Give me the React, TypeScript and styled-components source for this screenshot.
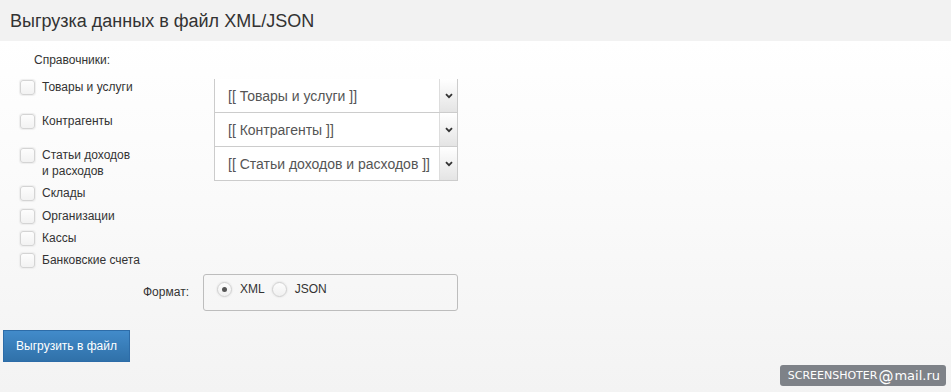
import React from 'react'
import styled, { createGlobalStyle } from 'styled-components'

const GlobalStyle = createGlobalStyle`
  html, body {
    margin: 0;
    padding: 0;
    height: 100%;
  }
  body {
    font-family: 'Liberation Sans', Arial, sans-serif;
    font-size: 12px;
    color: #333;
    background: #f4f4f4;
  }
  #root {
    height: 100%;
  }
`

const catalogs = [
  { id: 1, label: 'Товары и услуги', select: '[[ Товары и услуги ]]' },
  { id: 2, label: 'Контрагенты', select: '[[ Контрагенты ]]' },
  { id: 3, label: 'Статьи доходов\nи расходов', select: '[[ Статьи доходов и расходов ]]' },
  { id: 4, label: 'Склады' },
  { id: 5, label: 'Организации' },
  { id: 6, label: 'Кассы' },
  { id: 7, label: 'Банковские счета' },
]

const Page = styled.div`
  position: relative;
  height: 392px;
  background: linear-gradient(180deg, #ffffff 41px, #fafafa 200px, #f3f3f3 392px);
  overflow: hidden;
`

const Header = styled.header`
  height: 41px;
  background: #f2f2f2;
  display: flex;
  align-items: center;
  padding: 0 10px;
`

const Title = styled.h1`
  margin: 0;
  font-size: 18px;
  font-weight: normal;
  color: #333;
  padding-top: 1px;
`

const Body = styled.div`
  padding: 11px 0 0 0;
`

const Caption = styled.div`
  margin-left: 34px;
  height: 16px;
  line-height: 16px;
`

const Rows = styled.div`
  display: grid;
  grid-template-columns: 214px 244px;
  margin-top: 11px;
`

const Row = styled.div<{ $tall?: boolean; $gap?: boolean }>`
  grid-column: 1;
  display: flex;
  align-items: ${p => (p.$tall ? 'flex-start' : 'center')};
  padding-left: 20px;
  height: ${p => (p.$tall ? '34px' : '22.4px')};
  margin-top: ${p => (p.$gap ? '1px' : '0')};
`

const CheckLabel = styled.label`
  display: flex;
  align-items: flex-start;
  gap: 7px;
  white-space: pre-line;
  line-height: 16px;
  cursor: pointer;
`

const Box = styled.span`
  width: 13px;
  height: 13px;
  border: 1px solid #d4d4d4;
  border-radius: 3px;
  background: linear-gradient(180deg, #fdfdfd, #f2f2f2);
  box-shadow: 0 0 1px 1px #eeeeee;
  flex: none;
  margin-top: 1px;
`

const SelectCell = styled.div`
  grid-column: 2;
  display: flex;
  height: 33px;
  border: 1px solid #cccccc;
  border-top-width: 0;
  background: #fff;
  &:first-of-type {
    border-top-width: 1px;
  }
`

const SelectText = styled.div`
  flex: 1;
  display: flex;
  align-items: center;
  padding-left: 13px;
  font-size: 14px;
  color: #555;
`

const Arrow = styled.div`
  width: 17px;
  border-left: 1px solid #dddddd;
  background: linear-gradient(180deg, #ffffff, #e4e4e4);
  display: flex;
  align-items: center;
  justify-content: center;
`

const FormatRow = styled.div`
  display: flex;
  align-items: center;
  margin-top: 2px;
  padding-left: 143px;
`

const FormatLabel = styled.div`
  width: 60px;
`

const Fieldset = styled.div`
  width: 255px;
  height: 37px;
  border: 1px solid #bdbdbd;
  border-radius: 3px;
  display: flex;
  align-items: flex-start;
  padding: 7px 0 0 13px;
  box-sizing: border-box;
  gap: 7px;
`

const RadioLabel = styled.label`
  display: flex;
  align-items: center;
  gap: 8px;
`

const Radio = styled.span<{ $checked?: boolean }>`
  width: 13px;
  height: 13px;
  border-radius: 50%;
  border: 1px solid #d0d0d0;
  background: linear-gradient(180deg, #fdfdfd, #f0f0f0);
  box-shadow: 0 0 1px 1px #ececec;
  display: flex;
  align-items: center;
  justify-content: center;
  &::after {
    content: '';
    width: 5px;
    height: 5px;
    border-radius: 50%;
    background: ${p => (p.$checked ? '#555' : 'transparent')};
  }
`

const Button = styled.button`
  margin: 19px 0 0 3px;
  width: 127px;
  height: 32px;
  border: 1px solid #2d6ca8;
  background: linear-gradient(180deg, #428bca, #3071a9);
  color: #fff;
  font-family: 'Liberation Sans', Arial, sans-serif;
  font-size: 12px;
  padding: 0;
`

const Badge = styled.div`
  position: absolute;
  right: 5px;
  bottom: 6px;
  background: #7e8288;
  color: #fff;
  border-radius: 3px;
  padding: 0 6px 0 8px;
  height: 21px;
  display: flex;
  align-items: center;
  font-family: 'DejaVu Sans', sans-serif;
  font-size: 11px;
  span {
    font-size: 15px;
    margin: 0 1px;
  }
  b {
    font-weight: normal;
    font-size: 13px;
  }
`

const Chevron = () => (
  <svg width="8" height="6" viewBox="0 0 8 6">
    <path d="M1 1.2 L4 4.2 L7 1.2" stroke="#333" strokeWidth="1.8" fill="none" />
  </svg>
)

const App: React.FC = () => (
  <Page>
    <GlobalStyle />
    <Header>
      <Title>Выгрузка данных в файл XML/JSON</Title>
    </Header>
    <Body>
      <Caption>Справочники:</Caption>
      <Rows>
        {catalogs.map(c => (
          <React.Fragment key={c.id}>
            <Row $tall={!!c.select} $gap={c.id === 4}>
              <CheckLabel>
                <Box />
                {c.label}
              </CheckLabel>
            </Row>
            {c.select && (
              <SelectCell style={{ gridRow: c.id }}>
                <SelectText>{c.select}</SelectText>
                <Arrow>
                  <Chevron />
                </Arrow>
              </SelectCell>
            )}
          </React.Fragment>
        ))}
      </Rows>
      <FormatRow>
        <FormatLabel>Формат:</FormatLabel>
        <Fieldset>
          <RadioLabel>
            <Radio $checked />
            XML
          </RadioLabel>
          <RadioLabel>
            <Radio />
            JSON
          </RadioLabel>
        </Fieldset>
      </FormatRow>
      <Button>Выгрузить в файл</Button>
    </Body>
    <Badge>
      SCREENSHOTER<span>@</span>
      <b>mail.ru</b>
    </Badge>
  </Page>
)

export default App
